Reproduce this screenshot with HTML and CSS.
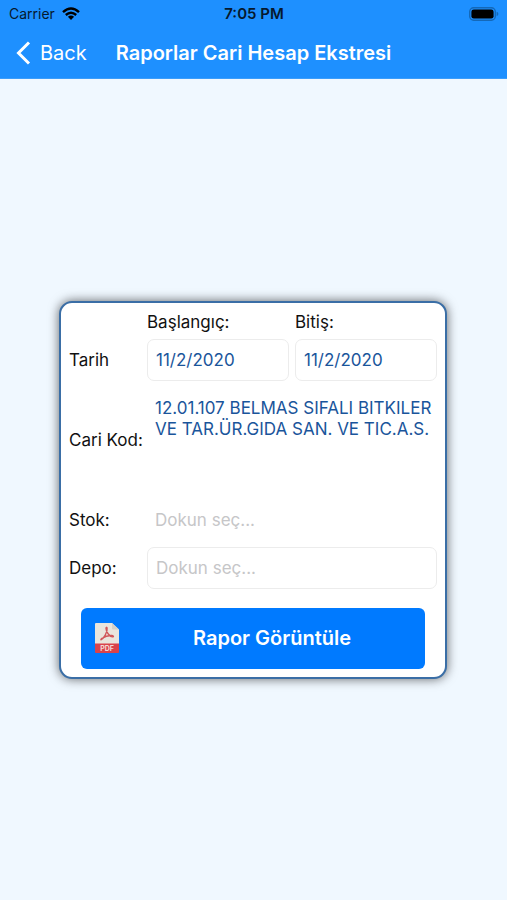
FILE: index.html
```html
<!DOCTYPE html>
<html lang="tr">
<head>
<meta charset="utf-8">
<meta name="viewport" content="width=device-width, initial-scale=1">
<title>Raporlar Cari Hesap Ekstresi</title>
<link rel="stylesheet" href="styles.css">
</head>
<body>
<header class="top">
  <div class="status">
    <div class="carrier">
      <span>Carrier</span>
      <svg class="wifi" viewBox="0 0 18 13" aria-hidden="true">
        <path d="M1 5.2Q9-2.2 17 5.2M3.8 8Q9 3.4 14.2 8" fill="none" stroke="currentColor" stroke-width="2.4"/>
        <path d="M5.9 9.8Q9 7.4 12.1 9.8L9 13Z" fill="currentColor"/>
      </svg>
    </div>
    <span class="time">7:05 PM</span>
    <svg class="battery" viewBox="0 0 30 14" aria-hidden="true">
      <rect x=".7" y=".7" width="25.6" height="12.6" rx="4" fill="none" stroke="#1468b8" stroke-width="1.4"/>
      <rect x="2.4" y="2.4" width="22.2" height="9.2" rx="2.4" fill="#000"/>
      <path d="M27.6 4.8Q29.4 5.4 29.4 7T27.6 9.2Z" fill="#1468b8"/>
    </svg>
  </div>
  <nav class="nav">
    <a class="back" href="#">
      <svg class="chevron" viewBox="0 0 15 24" aria-hidden="true"><path d="M13 1.5 2.5 12 13 22.5" fill="none" stroke="currentColor" stroke-width="3"/></svg>
      <span>Back</span>
    </a>
    <h1 class="title">Raporlar Cari Hesap Ekstresi</h1>
  </nav>
</header>
<main class="page">
  <form class="card">
    <div class="grid">
      <label class="head head-start" for="start">Başlangıç:</label>
      <label class="head" for="end">Bitiş:</label>
      <span class="label">Tarih</span>
      <input class="field" id="start" type="text" value="11/2/2020">
      <input class="field" id="end" type="text" value="11/2/2020">
      <label class="label" for="account">Cari Kod:</label>
      <textarea class="field wide plain area" id="account">12.01.107 BELMAS SIFALI BITKILER VE TAR.ÜR.GIDA SAN. VE TIC.A.S.</textarea>
      <label class="label" for="stock">Stok:</label>
      <input class="field wide plain" id="stock" type="text" placeholder="Dokun seç...">
      <label class="label" for="depot">Depo:</label>
      <input class="field wide" id="depot" type="text" placeholder="Dokun seç...">
    </div>
    <button class="submit" type="button">
      <svg class="pdf" viewBox="0 0 24 30" aria-hidden="true">
        <path d="M1 0H17L24 6.5V21H0V1Q0 0 1 0Z" fill="#e9e5dd"/>
        <path d="M17 0 24 6.5H18Q17 6.5 17 5.5Z" fill="#d5d0c8"/>
        <path d="M0 20.5H24V29Q24 30 23 30H1Q0 30 0 29Z" fill="#d9434b"/>
        <path d="M6.2 16.6C8.4 15.8 12.8 9.5 12.1 5.2 11.9 3.9 10.9 4.1 11 5.4 11.2 9 14.2 13.3 17.4 13.9 18.9 14.1 18.7 12.6 17 12.5 13.5 12.3 9.7 13.5 7.3 15.2 5.8 16.2 5.6 17 6.2 16.6Z" fill="none" stroke="#d0575a" stroke-width="1.4"/>
        <text x="12" y="27.9" text-anchor="middle" class="pdf-text">PDF</text>
      </svg>
      <span class="submit-text">Rapor Görüntüle</span>
    </button>
  </form>
</main>
</body>
</html>
```

FILE: styles.css
```css
* {
  box-sizing: border-box;
}

body {
  margin: 0;
  min-height: 100vh;
  display: flex;
  flex-direction: column;
  background: #f0f8ff;
  color: #111;
  font-family: Inter, "Liberation Sans", sans-serif;
  font-size: 17px;
}

.top {
  background: #1e90ff;
  border-bottom: 1px solid #3b9dfb;
}

.status {
  display: grid;
  grid-template-columns: 1fr auto 1fr;
  align-items: center;
  height: 27px;
  padding: 0 8px 0 9px;
  color: #06192e;
  font-size: 14px;
}

.carrier {
  display: flex;
  align-items: center;
  gap: 7px;
}

.wifi {
  width: 18px;
  height: 13px;
  color: #000;
}

.time {
  font-size: 15px;
  font-weight: 600;
}

.battery {
  width: 30px;
  height: 14px;
  justify-self: end;
}

.nav {
  display: grid;
  grid-template-columns: 1fr auto 1fr;
  align-items: center;
  height: 51px;
  padding: 0 16px;
  color: #fff;
}

.back {
  display: flex;
  align-items: center;
  gap: 9px;
  color: inherit;
  font-size: 20px;
  text-decoration: none;
}

.chevron {
  width: 15px;
  height: 24px;
}

.title {
  margin: 0;
  font-size: 20px;
  font-weight: 600;
}

.page {
  flex: 1;
  display: flex;
  flex-direction: column;
  justify-content: center;
  padding: 0 60px 0 59px;
}

.card {
  padding: 0 8px 8px;
  background: #fff;
  border: 2px solid #3a6ea6;
  border-radius: 13px;
  box-shadow: 0 0 11px rgba(0, 0, 0, 0.6);
}

.grid {
  display: grid;
  grid-template-columns: 72px minmax(0, 1fr) minmax(0, 1fr);
  grid-template-rows: 30px 42px 106px 42px 42px;
  column-gap: 6px;
  row-gap: 6px;
  align-items: center;
}

.head {
  padding-top: 8px;
}

.head-start {
  grid-column: 2;
}

.label {
  white-space: nowrap;
}

.field {
  width: 100%;
  height: 42px;
  margin: 0;
  padding: 0 8px;
  background: #fff;
  border: 1px solid #ececec;
  border-radius: 7px;
  color: #1a559b;
  font: inherit;
}

.field::placeholder {
  color: #c6c6c8;
  opacity: 1;
}

.wide {
  grid-column: 2 / -1;
}

.plain {
  padding: 0 7px;
  border-color: transparent;
}

.area {
  height: 106px;
  padding: 10px 0 0 7px;
  line-height: 21px;
  resize: none;
  overflow: hidden;
}

.submit {
  display: grid;
  grid-template-columns: 24px 1fr;
  align-items: center;
  width: calc(100% - 24px);
  height: 61px;
  margin: 19px 12px 0;
  padding: 0 14px;
  background: #007aff;
  border: 0;
  border-radius: 6px;
  color: #fff;
  font: 600 20px Inter, "Liberation Sans", sans-serif;
}

.submit-text {
  padding-left: 14px;
}

.pdf {
  width: 24px;
  height: 30px;
}

.pdf-text {
  fill: #f4d9d6;
  font-size: 7px;
  font-weight: 700;
}
```
